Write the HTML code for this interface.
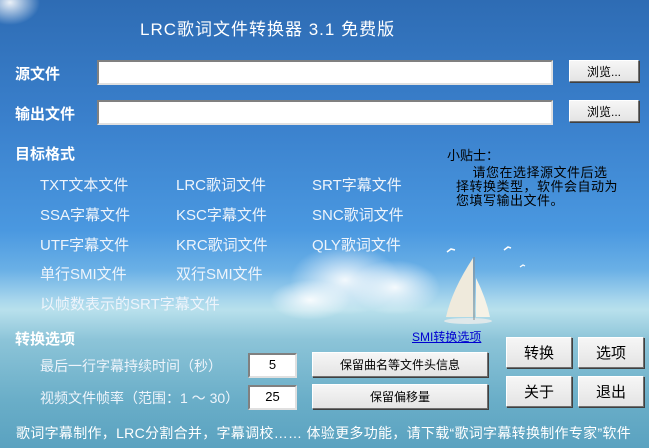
<!DOCTYPE html>
<html><head><meta charset="utf-8"><style>
*{margin:0;padding:0;box-sizing:border-box}
body{width:649px;height:448px;overflow:hidden;position:relative;font-family:"Liberation Sans","Noto Sans CJK SC",sans-serif;
background:linear-gradient(180deg,#2e6cb4 0px,#3a80cc 120px,#4a98e0 230px,#6ab0e6 270px,#a8d6ec 300px,#b8e0ec 310px,#8cc4d8 340px,#6aaec8 400px,#5aa2c0 448px)}
.a{position:absolute;white-space:nowrap}
.w{color:#fff}
.lbl{font-weight:bold;font-size:15px;color:#fff}
.opt{font-size:15px;color:#eef4fb}
.in{position:absolute;background:#fff;border:2px solid;border-color:#808080 #e0e0e0 #e0e0e0 #808080}
.btn{position:absolute;background:linear-gradient(#f6f6f6,#e4e4e4);border:1px solid;border-color:#fff #707070 #707070 #fff;box-shadow:1px 1px 0 #404040;font-size:12px;color:#000;display:flex;align-items:center;justify-content:center}
.big{font-size:15px}
.cloud{position:absolute;border-radius:50%;background:radial-gradient(closest-side,rgba(255,255,255,.9),rgba(255,255,255,0))}
</style></head><body>
<div class="cloud" style="left:290px;top:245px;width:110px;height:70px"></div>
<div class="cloud" style="left:350px;top:260px;width:90px;height:55px"></div>
<div class="cloud" style="left:270px;top:280px;width:80px;height:40px"></div>
<div class="cloud" style="left:-20px;top:-20px;width:60px;height:45px"></div>
<svg class="a" style="left:440px;top:240px" width="100" height="90" viewBox="0 0 100 90">
<ellipse cx="28" cy="81" rx="24" ry="3" fill="#dfe8ea"/>
<path d="M33 18 Q12 50 6 77 L33 77 Z" fill="#efeadc"/>
<path d="M36 38 Q46 58 50 77 L36 77 Z" fill="#f6f2e6"/>
<line x1="34" y1="17" x2="34" y2="80" stroke="#8a8a8a" stroke-width="1"/>
<path d="M7 12 l4 -3 l4 1" stroke="#fff" stroke-width="1.5" fill="none"/>
<path d="M64 10 l4 -3 l3 1" stroke="#fff" stroke-width="1.5" fill="none"/>
<path d="M80 27 l3 -2 l2 1" stroke="#fff" stroke-width="1.2" fill="none"/>
</svg>
<div class="a w" style="left:140px;top:15px;font-size:17px;letter-spacing:1px">LRC歌词文件转换器 3.1 免费版</div>
<div class="a lbl" style="left:15px;top:63px">源文件</div>
<div class="in" style="left:97px;top:60px;width:456px;height:25px"></div>
<div class="btn" style="left:569px;top:60px;width:70px;height:22px">浏览...</div>
<div class="a lbl" style="left:15px;top:103px">输出文件</div>
<div class="in" style="left:97px;top:100px;width:456px;height:25px"></div>
<div class="btn" style="left:569px;top:100px;width:70px;height:22px">浏览...</div>
<div class="a lbl" style="left:15px;top:143px">目标格式</div>
<div class="a opt" style="left:40px;top:174px">TXT文本文件</div>
<div class="a opt" style="left:176px;top:174px">LRC歌词文件</div>
<div class="a opt" style="left:312px;top:174px">SRT字幕文件</div>
<div class="a opt" style="left:40px;top:204px">SSA字幕文件</div>
<div class="a opt" style="left:176px;top:204px">KSC字幕文件</div>
<div class="a opt" style="left:312px;top:204px">SNC歌词文件</div>
<div class="a opt" style="left:40px;top:234px">UTF字幕文件</div>
<div class="a opt" style="left:176px;top:234px">KRC歌词文件</div>
<div class="a opt" style="left:312px;top:234px">QLY歌词文件</div>
<div class="a opt" style="left:40px;top:263px">单行SMI文件</div>
<div class="a opt" style="left:176px;top:263px">双行SMI文件</div>
<div class="a opt" style="left:40px;top:293px">以帧数表示的SRT字幕文件</div>
<div class="a" style="left:447px;top:145px;font-size:13px;color:#000">小贴士：</div>
<div class="a" style="left:456px;top:166px;font-size:13px;color:#000;line-height:14px;letter-spacing:0.5px">&nbsp;&nbsp;&nbsp;&nbsp;请您在选择源文件后选<br>择转换类型，软件会自动为<br>您填写输出文件。</div>
<div class="a lbl" style="left:15px;top:328px">转换选项</div>
<div class="a" style="left:412px;top:328px;font-size:12px;color:#0000d0;text-decoration:underline">SMI转换选项</div>
<div class="a opt" style="left:40px;top:356px;font-size:14px">最后一行字幕持续时间（秒）</div>
<div class="in" style="left:248px;top:353px;width:49px;height:25px;font-size:13px;text-align:center;line-height:19px">5</div>
<div class="btn" style="left:312px;top:352px;width:176px;height:25px">保留曲名等文件头信息</div>
<div class="a opt" style="left:40px;top:388px;font-size:14px">视频文件帧率（范围：1 ～ 30）</div>
<div class="in" style="left:248px;top:385px;width:49px;height:25px;font-size:13px;text-align:center;line-height:19px">25</div>
<div class="btn" style="left:312px;top:384px;width:176px;height:25px">保留偏移量</div>
<div class="btn big" style="left:506px;top:337px;width:66px;height:31px">转换</div>
<div class="btn big" style="left:578px;top:337px;width:66px;height:31px">选项</div>
<div class="btn big" style="left:506px;top:376px;width:66px;height:31px">关于</div>
<div class="btn big" style="left:578px;top:376px;width:66px;height:31px">退出</div>
<div class="a w" style="left:16px;top:423px;font-size:14px;letter-spacing:0.3px">歌词字幕制作，LRC分割合并，字幕调校…… 体验更多功能，请下载“歌词字幕转换制作专家”软件</div>
</body></html>
